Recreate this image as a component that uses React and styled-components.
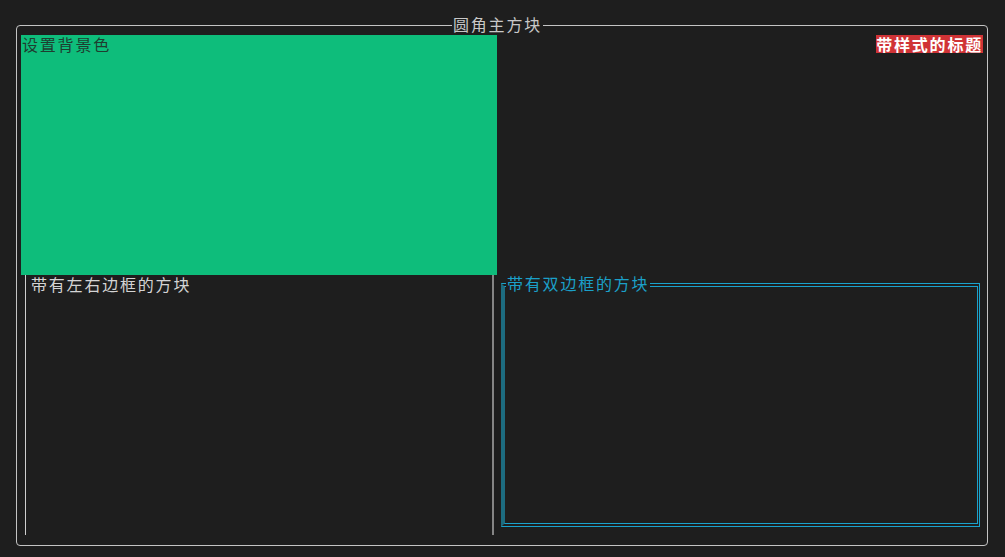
import React from "react";
import styled, { createGlobalStyle } from "styled-components";

const Global = createGlobalStyle`
  html, body {
    margin: 0;
    padding: 0;
    background: #1e1e1e;
  }
  body {
    font-family: "Noto Sans CJK SC", "Noto Sans", sans-serif;
    font-size: 16px;
    line-height: 18px;
    letter-spacing: 1.8px;
  }
`;

const Screen = styled.div`
  width: 1005px;
  height: 557px;
  padding: 25px 0 0 16px;
  box-sizing: border-box;
`;

const MainBlock = styled.div`
  position: relative;
  width: 972px;
  height: 521px;
  box-sizing: border-box;
  border: 1px solid #c4c4c4;
  border-radius: 4px;
  padding: 9px 4px 10px 4px;
  display: grid;
  grid-template-columns: 476px 486px;
  grid-template-rows: 240px 260px;
`;

const BlockTitle = styled.span`
  position: absolute;
  top: ${(p) => p.$top}px;
  left: ${(p) => p.$left}px;
  background: #1e1e1e;
  color: ${(p) => p.$color};
  white-space: nowrap;
  line-height: 18px;
  padding: 0 ${(p) => p.$pad || 0}px;
`;

const GreenBlock = styled.div`
  background: #0ebd7b;
  color: #1f3d30;
  padding-left: 1px;
`;

const TopRight = styled.div`
  display: flex;
  justify-content: flex-end;
  align-items: flex-start;
`;

const StyledTitle = styled.span`
  background: #d03336;
  color: #ffffff;
  font-weight: 700;
  height: 18px;
  line-height: 18px;
  white-space: nowrap;
`;

const SideBordered = styled.div`
  margin: 0 3px 0 4px;
  border-left: 1px solid #cfcfcf;
  border-right: 2px solid #858585;
  color: #d4d4d4;
  padding-left: 5px;
`;

const DoubleCell = styled.div`
  padding: 8px 3px 8px 4px;
  display: flex;
`;

const DoubleBlock = styled.div`
  position: relative;
  flex: 1;
  box-sizing: border-box;
  border-top: 4px double #1aa2cc;
  border-bottom: 4px double #1aa2cc;
  border-right: 3px double #1aa2cc;
  border-left: 4px solid #1d6c80;
`;

export default function App() {
  return (
    <>
      <Global />
      <Screen>
        <MainBlock>
          <BlockTitle $top={-11} $left={435} $color="#c8c8c8" $pad={1}>
            圆角主方块
          </BlockTitle>
          <GreenBlock>设置背景色</GreenBlock>
          <TopRight>
            <StyledTitle>带样式的标题</StyledTitle>
          </TopRight>
          <SideBordered>带有左右边框的方块</SideBordered>
          <DoubleCell>
            <DoubleBlock>
              <BlockTitle $top={-13} $left={1} $color="#1ba0c9" $pad={1}>
                带有双边框的方块
              </BlockTitle>
            </DoubleBlock>
          </DoubleCell>
        </MainBlock>
      </Screen>
    </>
  );
}
